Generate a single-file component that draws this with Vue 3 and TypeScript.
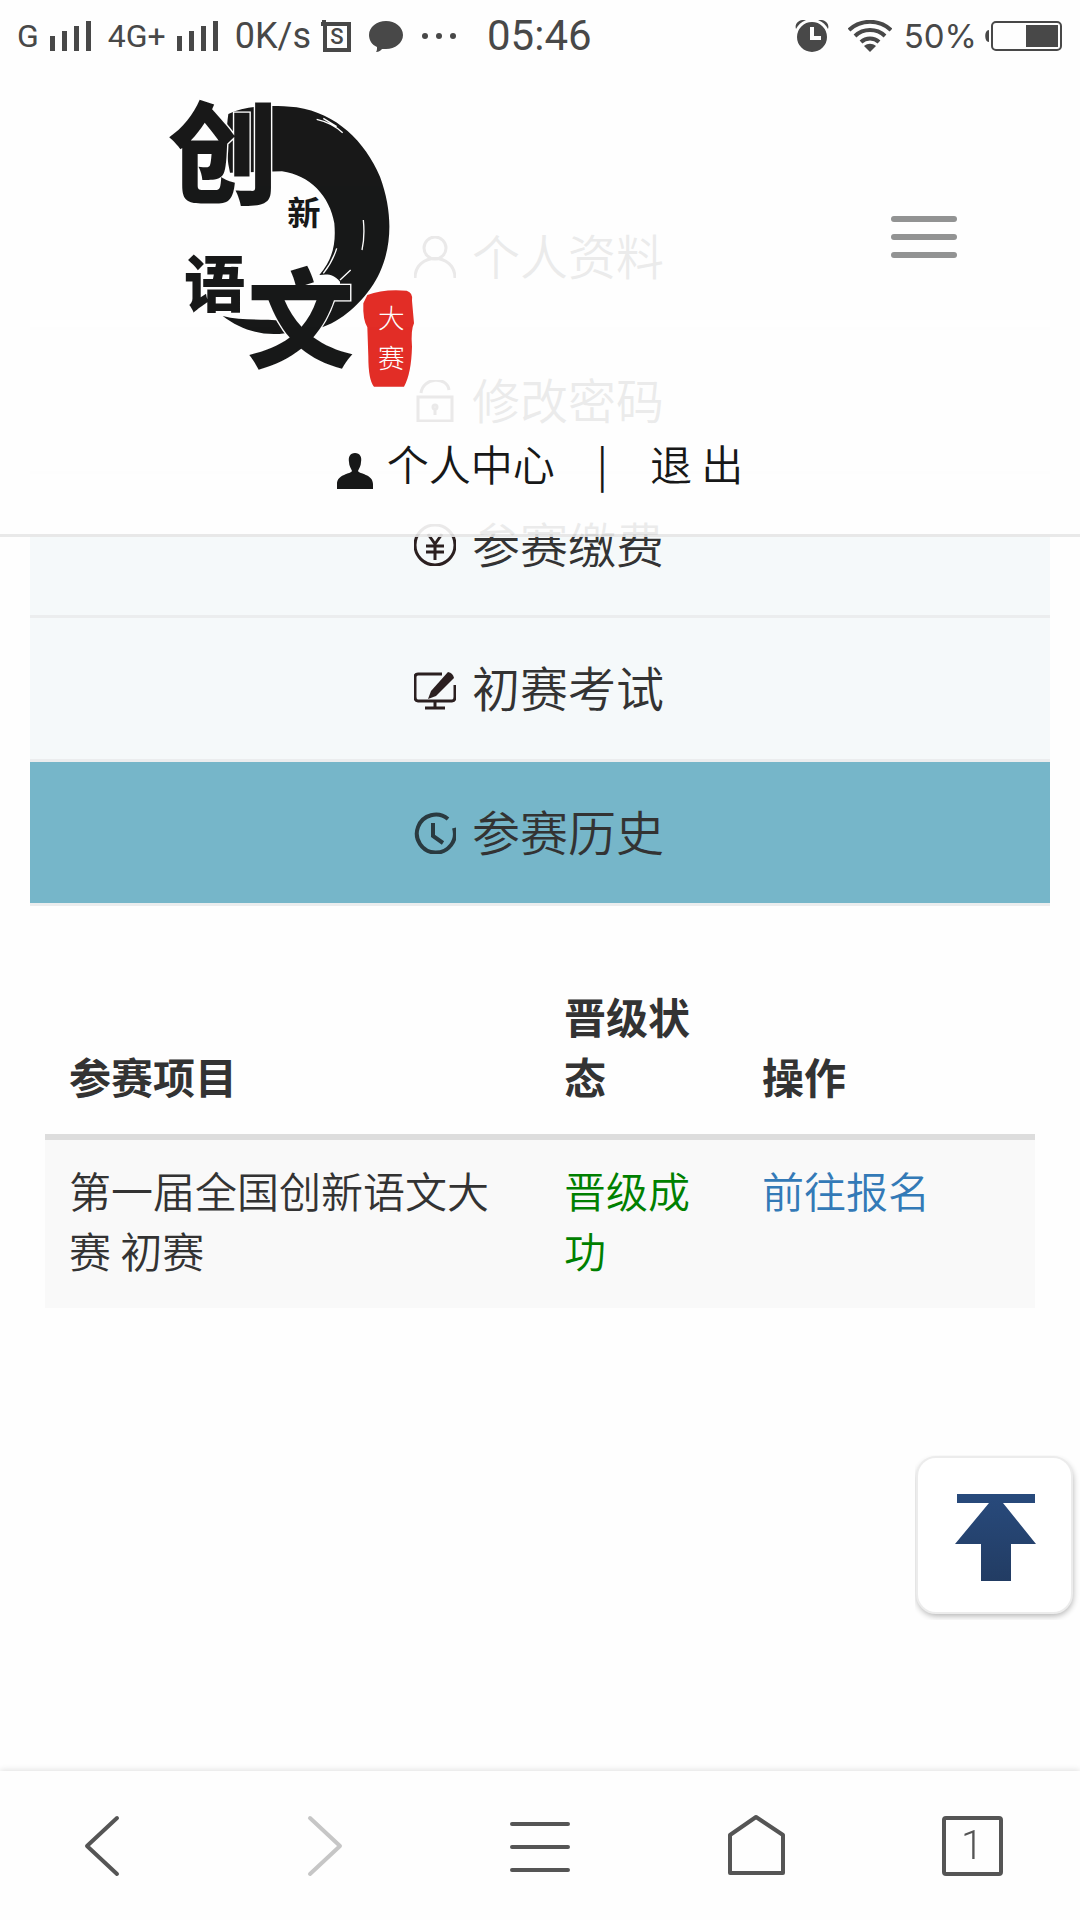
<script setup lang="ts">
interface MenuItem {
  label: string
  icon: 'user' | 'lock' | 'pay' | 'exam' | 'history'
  active?: boolean
}

interface Entry {
  project: string
  status: string
  action: string
}

const menu: MenuItem[] = [
  { label: '个人资料', icon: 'user' },
  { label: '修改密码', icon: 'lock' },
  { label: '参赛缴费', icon: 'pay' },
  { label: '初赛考试', icon: 'exam' },
  { label: '参赛历史', icon: 'history', active: true },
]

const entries: Entry[] = [
  { project: '第一届全国创新语文大赛 初赛', status: '晋级成功', action: '前往报名' },
]
</script>

<template>
  <div class="screen">
    <div class="status">
      <div class="status-left">
        <span class="net">G</span>
        <svg class="bars" width="42" height="32" viewBox="0 0 42 32"><path d="M0 16h5v15H0zM12 11h5v20h-5zM24 6h5v25h-5zM36 1h5v30h-5z" /></svg>
        <span class="net second">4G+</span>
        <svg class="bars" width="42" height="32" viewBox="0 0 42 32"><path d="M0 16h5v15H0zM12 11h5v20h-5zM24 6h5v25h-5zM36 1h5v30h-5z" /></svg>
        <span class="speed">0K/s</span>
        <svg class="sim" width="30" height="32" viewBox="0 0 30 32">
          <path d="M1 0h4v2h25v30H2V6H0V2h1zM6 6v22h20V6z" fill-rule="evenodd" />
          <text x="16" y="24" text-anchor="middle">S</text>
        </svg>
        <svg class="bubble" width="34" height="32" viewBox="0 0 34 32"><path d="M17 1c9 0 17 6 17 14s-8 14-17 14h-4c-1 1-3 3-6 3 1-1 1-3 1-5-5-2-8-7-8-12C0 7 8 1 17 1z" /></svg>
        <svg width="36" height="32" viewBox="0 0 36 32"><circle cx="4" cy="16" r="3" /><circle cx="18" cy="16" r="3" /><circle cx="32" cy="16" r="3" /></svg>
        <span class="clock">05:46</span>
      </div>
      <div class="status-right">
        <svg width="34" height="32" viewBox="0 0 34 32">
          <path d="M17 2a15 15 0 1 0 0 30 15 15 0 0 0 0-30zM15 7h4v9h7v4H15z" fill-rule="evenodd" />
          <path d="M1 9C-1 3 5-1 11 0 6 2 3 5 1 9zM33 9C35 3 29-1 23 0c5 2 8 5 10 9z" />
        </svg>
        <svg class="wifi" width="44" height="32" viewBox="0 0 44 32">
          <path d="M1 10a31 31 0 0 1 42 0M7 16a22 22 0 0 1 30 0M13 22a13 13 0 0 1 18 0" fill="none" stroke="#484848" stroke-width="4" />
          <path d="M22 32l-6-6c4-3 8-3 12 0z" />
        </svg>
        <span class="percent">50%</span>
        <svg class="battery" width="77" height="32" viewBox="0 0 77 32">
          <rect x="7" y="2" width="69" height="28" rx="4" fill="none" stroke="#484848" stroke-width="2" />
          <path d="M41 5h32v22H41zM4 10v12c-5 0-5-12 0-12z" />
        </svg>
      </div>
    </div>

    <div class="page">
      <header class="top">
        <div class="brand-row">
          <svg class="logo" width="280" height="320" viewBox="0 0 840 960" role="img" aria-label="创新语文大赛">
            <path d="M235 102C290 76 360 75 440 82C560 100 645 185 690 290C738 420 722 540 662 625C615 690 550 742 480 750L486 690C545 665 572 640 570 605C550 580 530 582 508 585C550 535 558 490 553 430C540 350 480 285 396 274L240 278C226 220 228 150 235 102z" />
            <path d="M218 708C270 722 330 716 400 722L440 752C360 776 280 756 218 708z" />
            <path d="M500 118Q545 128 578 158M520 115l40 25M570 600L602 570M520 580Q548 545 560 505M640 420Q645 470 636 510" fill="none" stroke="#fff" stroke-width="4" />
            <g class="ink">
              <text x="54" y="344" font-size="330">创</text>
              <text x="412" y="434" font-size="100" class="thin">新</text>
              <text x="102" y="680" font-size="184">语</text>
              <text x="292" y="838" font-size="320">文</text>
            </g>
            <path class="seal" d="M652 645Q700 626 770 632Q790 638 786 662L792 730Q782 750 786 800Q784 880 762 920H672Q655 900 655 830L652 742Q638 720 640 670z" />
            <g class="seal-text">
              <text x="684" y="744" font-size="80">大</text>
              <text x="684" y="864" font-size="80">赛</text>
            </g>
          </svg>
          <button class="toggle" type="button" aria-label="菜单"><i></i><i></i><i></i></button>
        </div>
        <div class="account">
          <a class="center" href="#">
            <svg width="36" height="36" viewBox="0 0 36 36"><path d="M18 0c5 0 7 4 6 9 0 4-2 6-3 9 1 3 15 3 15 13v5H0v-5c0-10 14-10 15-13-1-3-3-5-3-9-1-5 1-9 6-9z" /></svg>
            <span>个人中心</span>
          </a>
          <span>|</span>
          <a href="#">退 出</a>
        </div>
      </header>

      <nav class="menu">
        <a v-for="item in menu" :key="item.label" href="#" :class="{ active: item.active }">
          <svg width="42" height="42" viewBox="0 0 42 42">
            <template v-if="item.icon === 'user'">
              <circle cx="21" cy="12" r="11" />
              <path d="M1 42c0-26 40-26 40 0" />
            </template>
            <template v-else-if="item.icon === 'lock'">
              <path d="M4 17h34v24H4zM7 13c2-16 26-17 28-3" />
              <circle cx="21" cy="27" r="2" />
              <path d="M21 28v7" />
            </template>
            <template v-else-if="item.icon === 'pay'">
              <circle cx="21" cy="21" r="20" />
              <path d="M14 10l7 10 7-10M21 20v16M12 22h18M12 28h18" />
            </template>
            <template v-else-if="item.icon === 'exam'">
              <path d="M28 6H4Q1 6 1 9v20q0 4 3 4h34q3 0 3-4V17M21 33v6M11 40h20" />
              <path class="solid" d="M34 4q5 1 6 6L22 28l-8 3 3-8z" />
            </template>
            <template v-else>
              <path d="M34 7A19 19 0 1 0 40 16M19 11v13l10 7" />
            </template>
          </svg>
          <span>{{ item.label }}</span>
        </a>
      </nav>

      <main class="history">
        <table>
          <thead>
            <tr>
              <th class="w-project" scope="col">参赛项目</th>
              <th class="w-status" scope="col">晋级状态</th>
              <th scope="col">操作</th>
            </tr>
          </thead>
          <tbody>
            <tr v-for="entry in entries" :key="entry.project">
              <td>{{ entry.project }}</td>
              <td class="passed">{{ entry.status }}</td>
              <td><a href="#">{{ entry.action }}</a></td>
            </tr>
          </tbody>
        </table>
      </main>
    </div>

    <button class="to-top" type="button" aria-label="返回顶部">
      <svg width="165" height="165" viewBox="0 0 165 165">
        <defs>
          <linearGradient id="navy" x1="0" y1="0" x2="0" y2="1">
            <stop offset="0" stop-color="#284a7c" />
            <stop offset="1" stop-color="#223c63" />
          </linearGradient>
          <filter id="soft" x="-20%" y="-20%" width="140%" height="140%"><feGaussianBlur stdDeviation="3" /></filter>
        </defs>
        <rect x="2" y="5" width="156" height="156" rx="20" fill="#000" opacity=".3" filter="url(#soft)" />
        <rect x="2" y="2" width="155" height="156" rx="19" fill="#fff" stroke="#ececec" stroke-width="2" />
        <path d="M42 39h78v9H88l33 41H96v37H66V89H40l34-41H42z" fill="url(#navy)" />
      </svg>
    </button>

    <footer class="browser">
      <button type="button" aria-label="后退"><svg width="72" height="72" viewBox="0 0 72 72"><path class="round" d="M45 8L15 36L45 64" /></svg></button>
      <button type="button" aria-label="前进" disabled><svg width="72" height="72" viewBox="0 0 72 72"><path class="round" d="M22 8L52 36L22 64" /></svg></button>
      <button type="button" aria-label="选项"><svg width="72" height="72" viewBox="0 0 72 72"><path class="round" d="M8 14h56M8 37h56M8 60h56" /></svg></button>
      <button type="button" aria-label="主页"><svg width="72" height="72" viewBox="0 0 72 72"><path d="M10 25L36 7l27 18v38H10z" /></svg></button>
      <button type="button" aria-label="标签页"><span class="tabs">1</span></button>
    </footer>
  </div>
</template>

<style>
body {
  margin: 0;
  background: #fefefe;
}
</style>

<style scoped>
* {
  box-sizing: border-box;
}

.screen {
  min-height: 100vh;
  color: #333;
  background: #fefefe;
  font-family: "Noto Sans CJK SC", sans-serif;
  font-size: 42px;
  font-weight: 350;
  line-height: 60px;
}

svg {
  display: block;
  flex: none;
}

a {
  color: inherit;
  text-decoration: none;
}

button {
  padding: 0;
  border: 0;
  background: none;
  font: inherit;
  color: inherit;
}

.status {
  display: flex;
  justify-content: space-between;
  height: 72px;
  padding: 0 18px 0 17px;
  color: #484848;
  fill: #484848;
  font-family: Roboto, sans-serif;
  font-weight: 400;
  line-height: 74px;
}

.status-left,
.status-right {
  display: flex;
  align-items: center;
}

.net {
  font-size: 32px;
}

.second {
  margin-left: 16px;
}

.bars {
  margin-left: 11px;
}

.speed {
  margin-left: 16px;
  font-size: 36px;
}

.sim {
  margin-left: 10px;
}

.sim text {
  font: 500 22px Roboto, sans-serif;
}

.bubble {
  margin: 0 18px;
}

.clock {
  margin-left: 30px;
  font-size: 42px;
}

.wifi {
  margin: 0 12px 0 19px;
}

.percent {
  font-family: Inter, sans-serif;
  font-size: 33px;
}

.battery {
  margin-left: 8px;
}

.page {
  position: relative;
  padding-top: 114px;
}

.top {
  position: absolute;
  top: 0;
  left: 0;
  right: 0;
  z-index: 1;
  padding-top: 8px;
  border-bottom: 3px solid #e7e7e7;
  background: #fff;
  color: #000;
  opacity: 0.9;
}

.brand-row {
  display: flex;
  align-items: center;
  justify-content: space-between;
  padding: 0 123px 0 150px;
}

.logo {
  overflow: visible;
}

.ink text {
  font-family: "Noto Sans CJK SC", sans-serif;
  font-weight: 900;
  stroke: #fff;
  stroke-width: 8px;
  paint-order: stroke;
}

.ink .thin {
  font-weight: 700;
}

.seal {
  fill: #e01710;
}

.seal-text text {
  fill: #fff;
  font-family: "Noto Sans CJK SC", sans-serif;
  font-weight: 300;
}

.toggle {
  display: flex;
  flex-direction: column;
  gap: 12px;
  width: 66px;
  margin-bottom: 6px;
}

.toggle i {
  height: 6px;
  border-radius: 3px;
  background: #888;
}

.account {
  display: flex;
  align-items: center;
  justify-content: center;
  gap: 42px;
  height: 134px;
  padding-bottom: 8px;
}

.center {
  display: flex;
  align-items: center;
  gap: 14px;
}

.center svg {
  margin-top: 16px;
}

.menu a {
  display: flex;
  align-items: center;
  justify-content: center;
  gap: 16px;
  height: 144px;
  margin: 0 30px;
  padding-right: 2px;
  border-bottom: 3px solid #ebedee;
  background: #f5f9fa;
  font-size: 48px;
}

.menu span {
  padding-bottom: 6px;
}

.menu .active {
  background: #76b6c9;
}

.menu svg {
  fill: none;
  stroke: #2b2020;
  stroke-width: 3px;
}

.menu .active svg {
  stroke: #2a3a40;
  stroke-width: 4px;
}

.menu .solid {
  fill: #2b2020;
  stroke: none;
}

.history {
  padding: 60px 45px 200px;
}

table {
  width: 100%;
  table-layout: fixed;
  border-collapse: separate;
  border-spacing: 0;
}

th,
td {
  padding: 20px 24px 28px;
  text-align: left;
}

th {
  border-bottom: 6px solid #ddd;
  font-weight: 700;
  vertical-align: bottom;
}

td {
  background: #f9f9f9;
  vertical-align: top;
}

.w-project {
  width: 50%;
}

.w-status {
  width: 20%;
}

.passed {
  color: #008000;
}

td a {
  color: #337ab7;
}

.to-top {
  position: fixed;
  right: 0;
  bottom: 300px;
}

.browser {
  position: fixed;
  bottom: 0;
  left: 0;
  right: 0;
  display: grid;
  grid-template-columns: repeat(5, 1fr);
  height: 149px;
  background: #fefefe;
  box-shadow: 0 -1px 6px rgba(0, 0, 0, 0.12);
}

.browser button {
  display: flex;
  align-items: center;
  justify-content: center;
}

.browser svg {
  fill: none;
  stroke: #555;
  stroke-width: 4px;
  stroke-linejoin: round;
}

.browser button:disabled svg {
  stroke: #c6c6c6;
}

.round {
  stroke-linecap: round;
}

.tabs {
  width: 61px;
  height: 60px;
  border: 4px solid #555;
  border-radius: 4px;
  color: #555;
  font-family: Roboto, sans-serif;
  font-size: 40px;
  line-height: 52px;
}
</style>
